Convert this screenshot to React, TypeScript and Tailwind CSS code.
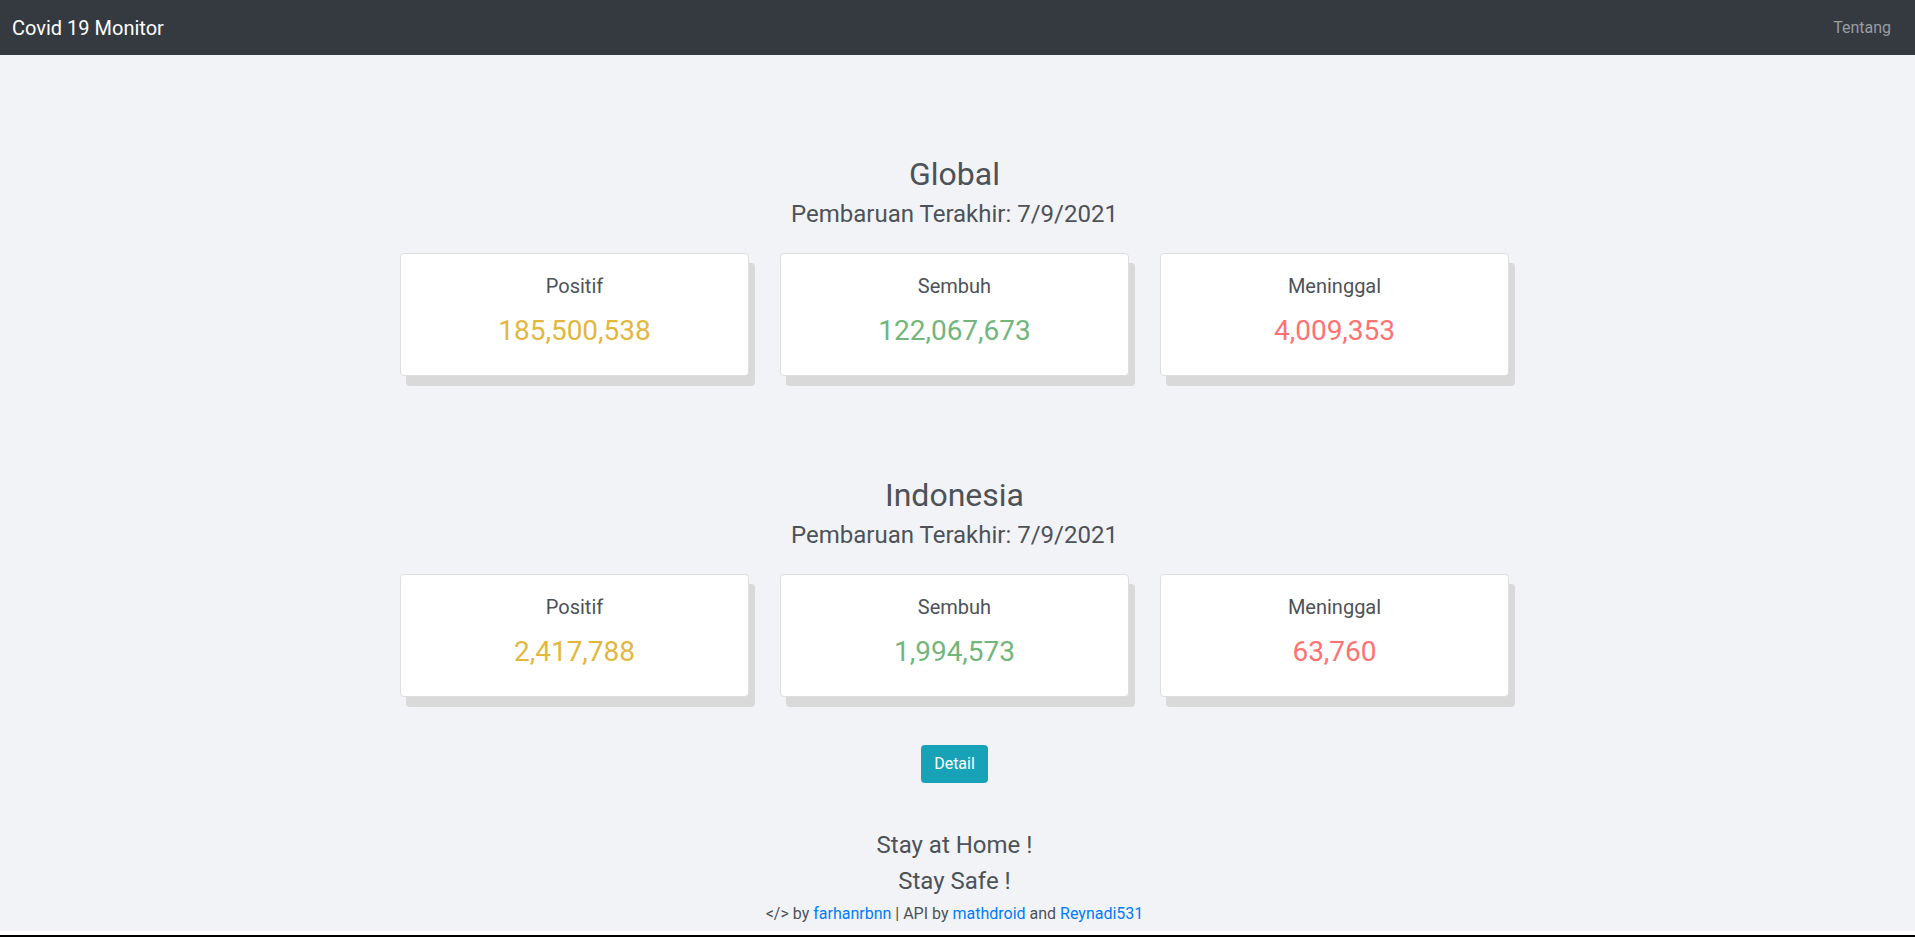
import React from "react";

type Stat = { label: string; value: string; color: string };

function Card({ s }: { s: Stat }) {
  return (
    <div className="bg-white border border-[#dedede] rounded-[4px] shadow-[6px_10px_0_0_#d9d9d9] h-[123px] flex flex-col items-center pt-[20px]">
      <div className="text-[20px] leading-[24px] text-[#4d5258]">{s.label}</div>
      <div className={`mt-[16px] text-[28px] leading-[34px] ${s.color}`}>{s.value}</div>
    </div>
  );
}

function Section({ title, stats }: { title: string; stats: Stat[] }) {
  return (
    <section className="flex flex-col items-center">
      <h2 className="text-[32px] leading-[38px] text-[#4d5258]">{title}</h2>
      <h4 className="mt-[7px] text-[24px] leading-[29px] text-[#4d5258]">Pembaruan Terakhir: 7/9/2021</h4>
      <div className="mt-[24px] grid grid-cols-[349px_349px_349px] gap-[31px]">
        {stats.map((s) => (
          <Card key={s.label} s={s} />
        ))}
      </div>
    </section>
  );
}

export default function App() {
  const global: Stat[] = [
    { label: "Positif", value: "185,500,538", color: "text-[#e3b73e]" },
    { label: "Sembuh", value: "122,067,673", color: "text-[#72b67b]" },
    { label: "Meninggal", value: "4,009,353", color: "text-[#ff7272]" },
  ];
  const indo: Stat[] = [
    { label: "Positif", value: "2,417,788", color: "text-[#e3b73e]" },
    { label: "Sembuh", value: "1,994,573", color: "text-[#72b67b]" },
    { label: "Meninggal", value: "63,760", color: "text-[#ff7272]" },
  ];
  return (
    <div className="h-[937px] flex flex-col font-['Roboto',sans-serif] overflow-hidden">
      <nav className="h-[55px] shrink-0 bg-[#343a40] flex items-center justify-between pl-[12px] pr-[24px]">
        <span className="text-white text-[20px] leading-[30px]">Covid 19 Monitor</span>
        <span className="text-[#9a9da0] text-[16px] leading-[24px]">Tentang</span>
      </nav>
      <main className="flex-1 bg-[#f2f3f7]">
        <div className="w-[1909px] flex flex-col items-center pt-[100px]">
          <Section title="Global" stats={global} />
          <div className="mt-[100px]">
            <Section title="Indonesia" stats={indo} />
          </div>
          <button className="mt-[48px] h-[38px] px-[13px] rounded-[4px] bg-[#17a2b8] text-white text-[16px] leading-[24px]">
            Detail
          </button>
          <div className="mt-[44px] text-[24px] leading-[36px] text-[#4d5258]">Stay at Home !</div>
          <div className="text-[24px] leading-[36px] text-[#4d5258]">Stay Safe !</div>
          <div className="mt-[3px] text-[16px] leading-[24px] text-[#4d5258]">
            &lt;/&gt; by <a className="text-[#007bff]">farhanrbnn</a> | API by{" "}
            <a className="text-[#007bff]">mathdroid</a> and <a className="text-[#007bff]">Reynadi531</a>
          </div>
        </div>
      </main>
      <div className="h-[4px] shrink-0 bg-white" />
      <div className="h-[2px] shrink-0 bg-black" />
    </div>
  );
}
